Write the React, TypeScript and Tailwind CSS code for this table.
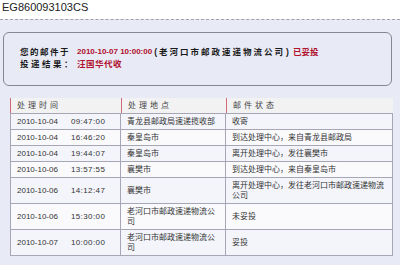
import React from "react";

const rows: { d: string; t: string; loc: string; st: string }[] = [
  { d: "2010-10-04", t: "09:47:00", loc: "青龙县邮政局速递揽收部", st: "收寄" },
  { d: "2010-10-04", t: "16:46:20", loc: "秦皇岛市", st: "到达处理中心，来自青龙县邮政局" },
  { d: "2010-10-04", t: "19:44:07", loc: "秦皇岛市", st: "离开处理中心，发往襄樊市" },
  { d: "2010-10-06", t: "13:57:55", loc: "襄樊市", st: "到达处理中心，来自秦皇岛市" },
  { d: "2010-10-06", t: "14:12:47", loc: "襄樊市", st: "离开处理中心，发往老河口市邮政速递物流公司" },
  { d: "2010-10-06", t: "15:30:00", loc: "老河口市邮政速递物流公司", st: "未妥投" },
  { d: "2010-10-07", t: "10:00:00", loc: "老河口市邮政速递物流公司", st: "妥投" },
];

export default function App() {
  return (
    <div
      className="w-[400px] h-[265px] overflow-hidden bg-[#e8eaf6]"
      style={{ fontFamily: '"Liberation Sans", "Noto Sans CJK SC", sans-serif' }}
    >
      <div className="h-[19px] bg-white pl-[2px] pt-[1px] text-[11px] leading-[12px] text-[#222]">
        EG860093103CS
      </div>
      <div className="border-t border-dashed border-[#a0a0a8]" />
      <div className="ml-[3px] mt-[12px] w-[389px] h-[54px] rounded-[6px] border border-[#868696] pl-[16px] pt-[13px] text-[8.5px] leading-[12px] font-bold text-[#1a1a1a]">
        <div className="flex items-center whitespace-nowrap">
          <span className="inline-block w-[57px] tracking-[1.5px]">您的邮件于</span>
          <span className="text-[8px] text-[#b0102c]">2010-10-07 10:00:00</span>
          <span className="ml-[2px]">(</span>
          <span className="ml-[2px] tracking-[2px]">老河口市邮政速递物流公司</span>
          <span className="ml-[1px]">)</span>
          <span className="ml-[4px] text-[#b0102c]">已妥投</span>
        </div>
        <div className="flex items-center whitespace-nowrap">
          <span className="inline-block w-[57px] tracking-[2.5px]">投递结果：</span>
          <span className="text-[#b0102c] tracking-[0.5px]">汪国华代收</span>
        </div>
      </div>
      <div className="ml-[10px] mt-[12px] w-[383px] text-[8px] leading-[10px] text-[#333]">
        <div className="flex h-[16px] bg-[#f2f2f3] border-b border-[#a6a6b6] text-[#444] tracking-[3px]">
          <div className="w-[111px] border-l border-[#d06a78] pl-[6px] flex items-center">处理时间</div>
          <div className="w-[105px] border-l border-[#d06a78] pl-[6px] flex items-center">处理地点</div>
          <div className="flex-1 border-l border-[#d06a78] pl-[6px] flex items-center">邮件状态</div>
        </div>
        {rows.map((r, i) => (
          <div
            key={i}
            className={
              "flex border-b border-l border-r border-[#a6a6b6] " +
              (i % 2 === 0 ? "bg-[#f4f5fb]" : "bg-[#fafafd]")
            }
          >
            <div className="w-[110px] shrink-0 border-r border-[#a6a6b6] pl-[6px] pt-[3px] pb-[2px] flex items-center whitespace-nowrap">
              <span>{r.d}</span>
              <span className="ml-[13px] tracking-[0.4px]">{r.t}</span>
            </div>
            <div className="w-[105px] shrink-0 border-r border-[#a6a6b6] pl-[6px] pr-[5px] pt-[3px] pb-[2px] flex items-center">
              <span>{r.loc}</span>
            </div>
            <div className="flex-1 pl-[6px] pr-[4px] pt-[3px] pb-[2px] flex items-center">
              <span>{r.st}</span>
            </div>
          </div>
        ))}
      </div>
    </div>
  );
}
